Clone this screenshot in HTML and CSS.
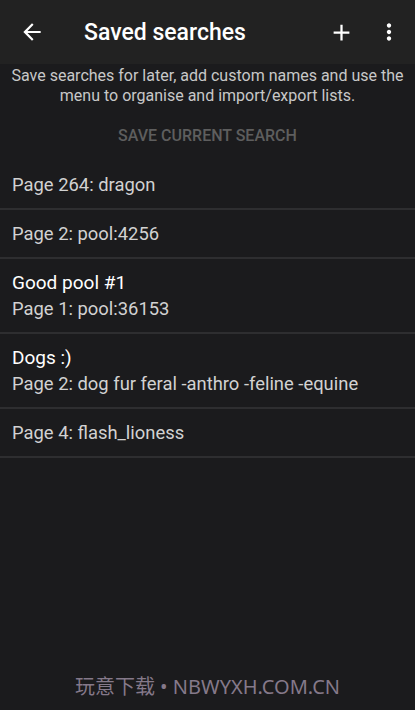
FILE: index.html
```html
<!DOCTYPE html>
<html lang="en">
<head>
  <meta charset="UTF-8">
  <meta name="viewport" content="width=device-width, initial-scale=1.0">
  <title>Saved searches</title>
  <link rel="stylesheet" href="styles.css">
</head>
<body>
  <!-- Top app bar -->
  <header class="toolbar">
    <button class="icon-btn back" aria-label="Back">
      <svg viewBox="0 0 24 24" width="26" height="26"><path fill="#fff" d="M20 11H7.83l5.59-5.59L12 4l-8 8 8 8 1.41-1.41L7.83 13H20v-2z"/></svg>
    </button>
    <h1 class="title">Saved searches</h1>
    <button class="icon-btn add" aria-label="Add">
      <svg viewBox="0 0 24 24" width="27" height="27"><path fill="#fff" d="M19 13h-6v6h-2v-6H5v-2h6V5h2v6h6v2z"/></svg>
    </button>
    <button class="icon-btn more" aria-label="More">
      <svg viewBox="0 0 24 24" width="26" height="26"><path fill="#fff" d="M12 8c1.1 0 2-.9 2-2s-.9-2-2-2-2 .9-2 2 .9 2 2 2zm0 2c-1.1 0-2 .9-2 2s.9 2 2 2 2-.9 2-2-.9-2-2-2zm0 6c-1.1 0-2 .9-2 2s.9 2 2 2 2-.9 2-2-.9-2-2-2z"/></svg>
    </button>
  </header>

  <p class="intro">Save searches for later, add custom names and use the menu to organise and import/export lists.</p>

  <button class="save-btn" disabled>Save current search</button>

  <!-- Saved search list -->
  <ul class="searches">
    <li class="item"><span class="query">Page 264: dragon</span></li>
    <li class="item"><span class="query">Page 2: pool:4256</span></li>
    <li class="item"><span class="name">Good pool #1</span><span class="query">Page 1: pool:36153</span></li>
    <li class="item"><span class="name">Dogs :)</span><span class="query">Page 2: dog fur feral -anthro -feline -equine</span></li>
    <li class="item"><span class="query">Page 4: flash_lioness</span></li>
  </ul>

  <footer class="watermark">玩意下载 • NBWYXH.COM.CN</footer>
</body>
</html>
```

FILE: styles.css
```css
html, body {
  height: 100%;
}
body {
  margin: 0;
  font-family: Roboto, "Noto Sans CJK SC", sans-serif;
  background-color: #1b1b1d;
  color: #fff;
  display: flex;
  flex-direction: column;
}
.toolbar {
  height: 64px;
  background-color: #222222;
  display: flex;
  align-items: center;
  flex-shrink: 0;
}
.icon-btn {
  background: none;
  border: none;
  padding: 0;
  display: flex;
  align-items: center;
  justify-content: center;
  width: 48px;
  height: 48px;
}
.back {
  margin-left: 8px;
}
.title {
  flex: 1;
  margin: 0 0 0 28px;
  font-size: 23px;
  font-weight: 500;
  color: #fff;
}
.more {
  margin-right: 2px;
}
.intro {
  margin: 2px 4px 0;
  text-align: center;
  font-size: 16px;
  line-height: 20px;
  color: #c8c8c8;
}
.save-btn {
  align-self: center;
  margin: 16px 0 12px;
  background: none;
  border: none;
  font-family: Roboto, sans-serif;
  font-size: 16px;
  font-weight: 500;
  text-transform: uppercase;
  color: #5e5e5e;
  padding: 4px 8px;
}
.searches {
  list-style: none;
  margin: 0;
  padding: 0;
}
.item {
  display: flex;
  flex-direction: column;
  justify-content: center;
  padding: 11px 12px;
  border-bottom: 2px solid #2e2e30;
}
.name {
  font-size: 19px;
  line-height: 26px;
  color: #fff;
}
.query {
  font-size: 18.4px;
  line-height: 25px;
  color: #d2d2d2;
}
.watermark {
  margin-top: auto;
  padding-bottom: 10px;
  text-align: center;
  font-family: "Noto Sans", "Noto Sans CJK SC", sans-serif;
  font-size: 20px;
  color: #85798a;
}
```
